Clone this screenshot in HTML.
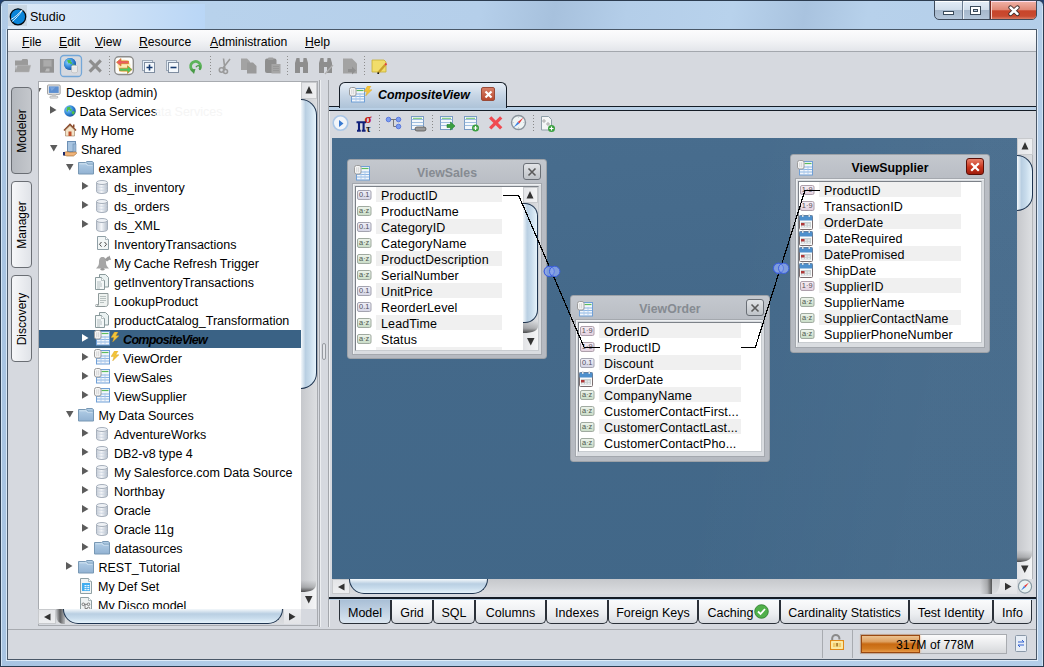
<!DOCTYPE html><html><head><meta charset="utf-8"><style>
*{margin:0;padding:0;box-sizing:border-box}
html,body{width:1044px;height:667px;overflow:hidden}
body{position:relative;background:#22406e;font-family:"Liberation Sans",sans-serif;font-size:12px;color:#000}
.a{position:absolute}
.t{position:absolute;white-space:nowrap;line-height:14px}
.row{position:absolute;height:19px;line-height:19px;white-space:nowrap;font-size:12.5px;word-spacing:-.3px}
.f{position:absolute;height:16px;line-height:16px;white-space:nowrap;font-size:12.5px;letter-spacing:.12px}
</style></head><body>
<svg width="0" height="0" style="position:absolute">
<defs>
<linearGradient id="gdb" x1="0" x2="1"><stop offset="0" stop-color="#c5ccd6"/><stop offset=".45" stop-color="#f4f6f9"/><stop offset="1" stop-color="#b3bcc8"/></linearGradient>
<linearGradient id="gfold" x1="0" y1="0" x2="0" y2="1"><stop offset="0" stop-color="#b4d0e8"/><stop offset="1" stop-color="#92b2d2"/></linearGradient>
<radialGradient id="gglobe" cx=".35" cy=".35" r=".7"><stop offset="0" stop-color="#8fd0ff"/><stop offset=".6" stop-color="#2f86d6"/><stop offset="1" stop-color="#1a4f9a"/></radialGradient>
<symbol id="i-monitor" viewBox="0 0 16 16"><rect x=".5" y=".5" width="13.5" height="10" rx="1" fill="#e8e8e8" stroke="#9a9a9a"/><rect x="2" y="2" width="10.5" height="7" fill="#5d8fd0"/><path d="M3 3l6 0-4 4z" fill="#8db4e6" opacity=".6"/><rect x="5" y="10.5" width="4.5" height="2" fill="#cfcfcf"/><rect x="3" y="12.5" width="8.5" height="2" rx=".8" fill="#eee" stroke="#999" stroke-width=".7"/></symbol>
<symbol id="i-globe" viewBox="0 0 12 12"><circle cx="6" cy="6" r="5.8" fill="url(#gglobe)"/><path d="M3 2.5c1-.8 2.5-1 3.5-.6l-.5 1.6 1.5.6.3 1.5-1.6.5-.8-1.2-1.4.2-.2 1.6-1.3-.6z M7.5 6.5l2.5-.5.8 1.8-1.5 2-1.3-1z" fill="#4cc04a"/></symbol>
<symbol id="i-house" viewBox="0 0 14 14"><path d="M1 7.5L7 1.5l6 6" fill="none" stroke="#8a4a2a" stroke-width="1.6"/><path d="M2.5 7v6h9V7L7 2.8z" fill="#f3e3c8" stroke="#9a7a5a" stroke-width=".6"/><rect x="5.5" y="8.5" width="3" height="4.5" fill="#c0502a"/><rect x="10" y="1.5" width="1.5" height="3" fill="#8a4a2a"/></symbol>
<symbol id="i-shared" viewBox="0 0 16 16"><rect x="4.5" y=".5" width="8" height="10" fill="#a8c4e0" stroke="#6c8fb4"/><rect x="10" y="3" width="3" height="8" fill="#9bb8d6" stroke="#6c8fb4" stroke-width=".6"/><path d="M1 11.5c2-1 4-1 6 0l5-.5c1 0 2 .5 1.5 1.5l-3 2.5H4L1 14z" fill="#f0b47a" stroke="#a0642a" stroke-width=".6"/><rect x="0" y="11" width="2" height="3.5" fill="#1c2a6a"/></symbol>
<symbol id="i-folder" viewBox="0 0 16 14"><path d="M.5 1.5h7l1.5-1h5l1.5 1v11.5H.5z" fill="url(#gfold)" stroke="#7898b4"/><path d="M1.5 2.8h6.5l1.3 1.4h5.2" fill="none" stroke="#d4e4f2" stroke-width=".9"/><path d="M8.8 1.5l1.2 1.6h5" fill="none" stroke="#7e9eba" stroke-width=".8"/></symbol>
<symbol id="i-db" viewBox="0 0 12 14"><path d="M.5 2.5v9c0 1.2 2.5 2 5.5 2s5.5-.8 5.5-2v-9" fill="url(#gdb)" stroke="#a7b0bc"/><ellipse cx="6" cy="2.5" rx="5.5" ry="2" fill="#eef1f5" stroke="#a7b0bc"/><path d="M.8 6.5c1 1 9.4 1 10.4 0M.8 9.5c1 1 9.4 1 10.4 0" fill="none" stroke="#c8d2e0" stroke-width=".8"/></symbol>
<symbol id="i-dbp" viewBox="0 0 12 14"><path d="M.5 2.5v9c0 1.2 2.5 2 5.5 2s5.5-.8 5.5-2v-9" fill="url(#gdb)" stroke="#a7b0bc"/><ellipse cx="6" cy="2.5" rx="5.5" ry="2" fill="#eef1f5" stroke="#a7b0bc"/></symbol>
<symbol id="i-xml" viewBox="0 0 12 14"><path d="M.5.5h8l3 3v10H.5z" fill="#f2f6f6" stroke="#8f9fa6"/><path d="M8.5.5v3h3" fill="#fff" stroke="#8f9fa6" stroke-width=".7"/><path d="M4.5 6L2.5 8.3l2 2.3M7.5 6l2 2.3-2 2.3" fill="none" stroke="#4a4a4a" stroke-width="1"/></symbol>
<symbol id="i-bell" viewBox="0 0 16 16"><path d="M7.5 2C4.5 2 4 4.5 4 7.5 4 10 3 11.5 1 13.5h13c-2-2-3-3.5-3-6C11 4.5 10.5 2 7.5 2z" fill="#a6a6a6"/><ellipse cx="7.5" cy="14.3" rx="2" ry="1.2" fill="#9a9a9a"/><path d="M9.5 4.5L13 1.5l2.5 2.5-3.5 2.5z" fill="#9c9c9c"/><path d="M14.5 .5l1.5 4.5-4.5-1z" fill="#9c9c9c"/></symbol>
<symbol id="i-doc" viewBox="0 0 14 16"><path d="M4.5 .5h6l3 3v9.5h-9z" fill="#eaf2f2" stroke="#8a9a9c"/><path d="M.5 3.5h6l3 3v9h-9z" fill="#f4f8f8" stroke="#8a9a9c"/><path d="M6.5 3.5v3h3" fill="#fff" stroke="#8a9a9c" stroke-width=".6"/><path d="M2 8h4M2 10h5M2 12h5M2 14h3" stroke="#a4b0b2" stroke-width=".8"/></symbol>
<symbol id="i-scroll" viewBox="0 0 14 14"><path d="M3.5 .5h9.5v10.5c0 1.5-1 2.5-2.5 2.5H1c1.5 0 2.5-1 2.5-2.5z" fill="#eef2f0" stroke="#8f9a9a"/><path d="M1 13.5c-1 0-1-2 .5-2h2" fill="none" stroke="#8f9a9a" stroke-width=".8"/><path d="M5 3.5h6M5 5.5h6M5 7.5h6M5 9.5h4" stroke="#a8b2b2" stroke-width=".8"/></symbol>
<symbol id="i-view" viewBox="0 0 16 16"><rect x="2.5" y="1.5" width="13" height="13.5" fill="#f2f6fb" stroke="#6f9fd6"/><path d="M3 7h12M3 9.5h12M3 12h12" stroke="#8db6e4" stroke-width="1"/><path d="M7 6v9M11 6v9" stroke="#a9c8ea" stroke-width=".8"/><path d="M7.5 3.5h7" stroke="#5cbc5c" stroke-width="1.2"/><rect x=".5" y=".5" width="6.5" height="8.5" rx="2" fill="#f6f6f6" stroke="#9c9c9c"/><path d="M2.8 2.3v5M4.7 2.3v5" stroke="#c4c4c4" stroke-width=".7"/></symbol>
<symbol id="i-bolt" viewBox="0 0 8 10"><path d="M3.5 0L0 5.6h3L1.6 10 8 3.8H4.8L7 0z" fill="#f2c43a" stroke="#d8a020" stroke-width=".4"/></symbol>
<symbol id="i-defset" viewBox="0 0 12 16"><path d="M.5.5h8l3 3v12H.5z" fill="#f0f4f4" stroke="#8fa0a4"/><path d="M8.5.5v3h3" fill="#fff" stroke="#8fa0a4" stroke-width=".7"/><rect x="2" y="5" width="8" height="8" fill="#42aef0"/><g fill="#eaf6fe"><rect x="4.5" y="7" width="2" height="1.2"/><rect x="7.3" y="7" width="2" height="1.2"/><rect x="4.5" y="9" width="2" height="1.2"/><rect x="7.3" y="9" width="2" height="1.2"/><rect x="4.5" y="11" width="2" height="1.2"/><rect x="7.3" y="11" width="2" height="1.2"/></g></symbol>
<symbol id="i-disco" viewBox="0 0 12 16"><path d="M.5.5h8l3 3v12H.5z" fill="#eef2f2" stroke="#8fa0a4"/><path d="M8.5.5v3h3" fill="#fff" stroke="#8fa0a4" stroke-width=".7"/><g fill="none" stroke="#6a6a6a" stroke-width=".8"><circle cx="3.3" cy="7.3" r="1.3"/><circle cx="8.5" cy="7.3" r="1.3"/><circle cx="8.5" cy="11.5" r="1.3"/><path d="M4.6 7.3h2.6M5 7.5v4h2.2"/></g></symbol>



<linearGradient id="g01" x1="0" y1="0" x2="0" y2="1"><stop offset="0" stop-color="#f0f0f8"/><stop offset="1" stop-color="#d4d4e4"/></linearGradient>
<linearGradient id="gaz" x1="0" y1="0" x2="0" y2="1"><stop offset="0" stop-color="#eef4ec"/><stop offset="1" stop-color="#c8dcc6"/></linearGradient>
<linearGradient id="g19" x1="0" y1="0" x2="0" y2="1"><stop offset="0" stop-color="#f6eef4"/><stop offset="1" stop-color="#e2d0de"/></linearGradient>
<symbol id="t-01" viewBox="0 0 15 10"><rect x=".5" y=".5" width="13.5" height="9" rx="1.5" fill="url(#g01)" stroke="#a4a4b0"/><text x="7.2" y="7.4" font-size="7.4" text-anchor="middle" font-family="Liberation Sans" fill="#505060">0.1</text></symbol>
<symbol id="t-az" viewBox="0 0 15 10"><rect x=".5" y=".5" width="13.5" height="9" rx="1.5" fill="url(#gaz)" stroke="#a0aaa0"/><text x="7.2" y="7.4" font-size="7.4" text-anchor="middle" font-family="Liberation Sans" fill="#505850">a&#183;z</text></symbol>
<symbol id="t-19" viewBox="0 0 15 10"><rect x=".5" y=".5" width="13.5" height="9" rx="1.5" fill="url(#g19)" stroke="#aea0ac"/><text x="7.2" y="7.4" font-size="7.4" text-anchor="middle" font-family="Liberation Sans" fill="#585058">1&#183;9</text></symbol>
<symbol id="t-cal" viewBox="0 0 14 16"><rect x=".5" y="1.5" width="13" height="14" rx="1" fill="#fafafa" stroke="#7a6e70"/><rect x=".5" y="1.5" width="13" height="5" fill="#4d8fcc"/><rect x="3" y="0" width="1.5" height="3" fill="#d8dde2"/><rect x="9.5" y="0" width="1.5" height="3" fill="#d8dde2"/><rect x="2" y="8" width="10" height="5.5" fill="#c8d0d2"/><rect x="2" y="9" width="3.5" height="2.5" fill="#b03838"/><path d="M6 10.2h1.6M8.8 10.2h2M6 12.3h1.6M8.8 12.3h2M3 12.3h2" stroke="#fff" stroke-width=".8"/></symbol>
</defs></svg>
<div class="a" style="left:0;top:0;width:1044px;height:667px;background:linear-gradient(90deg,#a8c4e2 0,#b6d0ea 30%,#b6d0ea 70%,#b3cde8 100%);border:1px solid #2c3c50;border-radius:6px 6px 0 0"></div>
<div class="a" style="left:1px;top:1px;width:1042px;height:28px;border-radius:5px 5px 0 0;background:linear-gradient(100deg,#b0cae6 0%,#b8d2ec 20%,#b5cfea 46%,#a7c1dd 53%,#b4cee9 60%,#b8d2ec 70%,#a9c3df 77%,#b7d1eb 83%,#b4cee9 100%)"></div>
<div class="a" style="left:8px;top:4px;width:197px;height:25px;background:linear-gradient(90deg,#dce9f7 0,#cfe2f6 50%,#b9d6f6 100%)"></div>
<div class="a" style="left:8px;top:5px;width:19px;height:21px;background:rgba(190,200,212,.55)"></div>
<svg class="a" style="left:9px;top:8px" width="18" height="18" viewBox="0 0 18 18"><ellipse cx="9" cy="8.8" rx="7.7" ry="8" fill="#0a84d8" stroke="#050a10" stroke-width="1.3"/><path d="M1.8 11.5C6 9.5 10 5.5 12.8 2.2M3.2 13.5C6.5 11 10.5 6.5 13.2 2.4" stroke="#f4faff" stroke-width=".9" fill="none"/></svg>
<div class="t" style="left:30px;top:10px;font-size:12.5px;color:#000">Studio</div>
<div class="a" style="left:934px;top:0;width:103px;height:20px;border:1px solid #3e4a5a;border-radius:0 0 5px 5px;overflow:hidden;background:linear-gradient(180deg,#e4edf7 0,#d2deeb 48%,#a6b8cc 52%,#b4c6da 100%);box-shadow:inset 0 1px 0 #fff">
 <div class="a" style="left:27px;top:0;width:1px;height:20px;background:#6c7c90"></div>
 <div class="a" style="left:28px;top:0;width:1px;height:20px;background:#eef4fa"></div>
 <div class="a" style="left:54px;top:0;width:1px;height:20px;background:#6c7c90"></div>
 <div class="a" style="left:55px;top:0;width:48px;height:19px;background:linear-gradient(180deg,#f0b4a8 0,#e08a78 45%,#c8452a 52%,#c84a30 80%,#e0907a 100%);border-left:1px solid #7a2a20;box-shadow:inset 0 1px 0 #fde,inset 1px 0 0 #f8d0c8"></div>
 <div class="a" style="left:8px;top:10px;width:11px;height:4px;background:#fff;border:1px solid #3a4a5a"></div>
 <div class="a" style="left:35px;top:5px;width:11px;height:9px;background:#fff;border:1px solid #3a4a5a"></div>
 <div class="a" style="left:38px;top:8px;width:5px;height:3px;background:#b9c9dc;border:1px solid #3a4a5a"></div>
</div>
<svg class="a" style="left:1006.5px;top:5px" width="14" height="12" viewBox="0 0 14 12"><path d="M3.5 2.5l7 6.5M10.5 2.5l-7 6.5" stroke="#3a2a2a" stroke-width="4.2" stroke-linecap="round"/><path d="M3.5 2.5l7 6.5M10.5 2.5l-7 6.5" stroke="#fff" stroke-width="2.4" stroke-linecap="round"/></svg>
<div class="a" style="left:1px;top:6px;width:1px;height:660px;background:#dcecfa;opacity:.8"></div>
<div class="a" style="left:6px;top:29px;width:1px;height:632px;background:#e4f0fb;opacity:.8"></div>
<div class="a" style="left:1037px;top:29px;width:1px;height:632px;background:#e4f0fb;opacity:.9"></div>
<div class="a" style="left:1042px;top:6px;width:1px;height:660px;background:#dcecfa;opacity:.7"></div>
<div class="a" style="left:6px;top:660px;width:1032px;height:1px;background:#e4f0fb;opacity:.9"></div>
<div class="a" style="left:7px;top:29px;width:1030px;height:631px;background:#d6d9df;border:1px solid #4a5868"></div>
<div class="a" style="left:8px;top:30px;width:1028px;height:22px;background:linear-gradient(180deg,#fcfcfd 0,#f4f5f7 45%,#e3e5ea 100%);border-bottom:1px solid #a3a7ad"></div>
<div class="t" style="left:22px;top:35px;font-size:12.2px"><u>F</u>ile</div>
<div class="t" style="left:59px;top:35px;font-size:12.2px"><u>E</u>dit</div>
<div class="t" style="left:95px;top:35px;font-size:12.2px"><u>V</u>iew</div>
<div class="t" style="left:139px;top:35px;font-size:12.2px"><u>R</u>esource</div>
<div class="t" style="left:210px;top:35px;font-size:12.2px"><u>A</u>dministration</div>
<div class="t" style="left:305px;top:35px;font-size:12.2px"><u>H</u>elp</div>
<!-- toolbar -->
<svg class="a" style="left:0;top:52px" width="400" height="30" viewBox="0 52 400 30">
 <path d="M15 60.5h6.5l1-1.5h4.8l.7 1.5v5H15z" fill="#9a9a9a"/>
 <path d="M17.5 65.3h13.2L29 72H15z" fill="#a3a3a3" stroke="#b4b4b4" stroke-width=".5"/>
 <path d="M15 64v8h1" fill="#9a9a9a"/>
 <rect x="40" y="59" width="14" height="13.7" fill="#939393"/>
 <rect x="43.2" y="60" width="8.5" height="6.7" fill="#ababab" stroke="#9e9e9e" stroke-width=".6"/>
 <path d="M45 71.5l1.5-3h3v3z" fill="#b9b9b9"/>
 <rect x="60.5" y="55.5" width="21" height="21" rx="3.5" fill="none" stroke="#74a7d8" stroke-width="1.3"/>
 <circle cx="70" cy="64" r="6" fill="#2e7fd0"/>
 <circle cx="70" cy="64" r="6" fill="url(#gglobe)"/><path d="M67 60.5c1.5-1 3-1 4-.6l-.6 1.6 1.4.8.2 1.4-1.4.4-.8-1-1.2.3z M72 64.5l2-.3.6 1.4-1.2 1.4z" fill="#4cc04a"/>
 <ellipse cx="74.5" cy="66.5" rx="3" ry="1.3" fill="#f4f4f4" stroke="#aaa" stroke-width=".5"/>
 <path d="M71.5 66.5v5c0 .8 1.3 1.3 3 1.3s3-.5 3-1.3v-5" fill="#e8e8e8" stroke="#aaa" stroke-width=".5"/>
 <path d="M90.8 61.6l8.8 8.8M99.6 61.6l-8.8 8.8" stroke="#8e8e8e" stroke-width="3.2" stroke-linecap="square"/>
 <g fill="#8e8e8e">
  <rect x="109" y="56" width="1" height="1"/><rect x="109" y="59" width="1" height="1"/><rect x="109" y="62" width="1" height="1"/><rect x="109" y="65" width="1" height="1"/><rect x="109" y="68" width="1" height="1"/><rect x="109" y="71" width="1" height="1"/><rect x="109" y="74" width="1" height="1"/>
  <rect x="210" y="56" width="1" height="1"/><rect x="210" y="59" width="1" height="1"/><rect x="210" y="62" width="1" height="1"/><rect x="210" y="65" width="1" height="1"/><rect x="210" y="68" width="1" height="1"/><rect x="210" y="71" width="1" height="1"/><rect x="210" y="74" width="1" height="1"/>
  <rect x="287" y="56" width="1" height="1"/><rect x="287" y="59" width="1" height="1"/><rect x="287" y="62" width="1" height="1"/><rect x="287" y="65" width="1" height="1"/><rect x="287" y="68" width="1" height="1"/><rect x="287" y="71" width="1" height="1"/><rect x="287" y="74" width="1" height="1"/>
  <rect x="364" y="56" width="1" height="1"/><rect x="364" y="59" width="1" height="1"/><rect x="364" y="62" width="1" height="1"/><rect x="364" y="65" width="1" height="1"/><rect x="364" y="68" width="1" height="1"/><rect x="364" y="71" width="1" height="1"/><rect x="364" y="74" width="1" height="1"/>
 </g>
 <rect x="114.7" y="56.7" width="18.6" height="17.8" rx="4" fill="#fdfdfb" stroke="#8c8c8c" stroke-width="1.4"/>
 <circle cx="124" cy="66" r="6.5" fill="#fbe6a0" opacity=".75"/>
 <path d="M116.5 62.3L121 58.6V61h7.5v2.7H121v2.4z" fill="#ec5a62" stroke="#d08020" stroke-width=".7"/>
 <path d="M132 69.6L127.5 65.8v2.4H119.5v2.8h8v2.4z" fill="#4cc860" stroke="#d08020" stroke-width=".7"/>
 <rect x="142.5" y="60.5" width="10" height="10" fill="#e4eef8" stroke="#9aa6b5"/>
 <rect x="144.5" y="62.5" width="10" height="10" fill="#f4f8fc" stroke="#7f8da0"/>
 <path d="M146.5 67.5h6M149.5 64.5v6" stroke="#173a70" stroke-width="1.6"/>
 <rect x="166.5" y="60.5" width="10" height="10" fill="#e4eef8" stroke="#9aa6b5"/>
 <rect x="168.5" y="62.5" width="10" height="10" fill="#f4f8fc" stroke="#7f8da0"/>
 <path d="M170.5 67.5h6" stroke="#173a70" stroke-width="1.6"/>
 <path d="M193.2 70.8A5 5 0 1 1 199.5 69.5" fill="none" stroke="#5cb35a" stroke-width="2.8"/>
 <path d="M199.2 69.8a2.2 2.2 0 1 0-3.2-2.6" fill="none" stroke="#4a9a48" stroke-width="1.3"/>
 <path d="M190 69.5l5.5-.5-1.5 5z" fill="#4a9a48"/>
 <g fill="none" stroke="#9a9a9a" stroke-width="1.6">
  <circle cx="221.5" cy="70" r="2.2"/><circle cx="225.5" cy="71.5" r="2"/>
  <path d="M223 68l7-9M225 69.5l-1.5-11"/>
 </g>
 <path d="M241 58.5h6l3 3v8.5h-9z" fill="#a3a3a3"/>
 <path d="M247 62.5h6l3.5 3.5v7.5H247z" fill="#9a9a9a"/>
 <rect x="265" y="58.5" width="11.5" height="14.5" rx="2" fill="#8e8e8e"/>
 <rect x="268" y="57.5" width="5.5" height="2.5" rx="1" fill="#a0a0a0"/>
 <rect x="271.5" y="64" width="9" height="9.5" fill="#a5a5a5"/>
 <path d="M273 66.5h6M273 68.5h6M273 70.5h6" stroke="#929292" stroke-width=".7"/>
 <g fill="#8e8e8e">
  <path d="M295 63l1.5-5h3l.5 5v10h-5z"/><path d="M303 63l.5-5h3l1.5 5v10h-5z"/><rect x="299" y="62" width="5" height="5"/>
  <path d="M319 63l1.5-5h3l.5 5v10h-5z"/><path d="M327 63l.5-5h3l1.5 5v10h-5z"/><rect x="323" y="62" width="5" height="5"/>
 </g>
 <path d="M325 74l8-9" stroke="#b0b0b0" stroke-width="1.2"/>
 <path d="M343 58.5h9l5 5v10h-14z" fill="#a3a3a3"/>
 <path d="M348 69h4v-2.5l4 4-4 4V72h-4z" fill="#8f8f8f"/>
 <path d="M372 60h12l2 2v10h-14z" fill="#f1dd6a" stroke="#c5ad32" stroke-width=".8"/>
 <path d="M378 73l7-8" stroke="#c9a02c" stroke-width="2.2"/>
 <path d="M385 65l1.5-1.5" stroke="#e04040" stroke-width="2"/>
 <circle cx="378.2" cy="73.2" r=".9" fill="#111"/>
</svg>
<div class="a" style="left:11px;top:87px;width:21px;height:87px;border:1px solid #6a6e74;border-radius:4px;background:linear-gradient(90deg,#b4b8be,#c4c7cc)"></div>
<div class="t" style="left:-28.5px;top:123.5px;width:100px;text-align:center;transform:rotate(-90deg);font-size:12px">Modeler</div>
<div class="a" style="left:11px;top:181px;width:21px;height:87px;border:1px solid #6a6e74;border-radius:4px;background:linear-gradient(90deg,#f6f7f9,#e0e3e8)"></div>
<div class="t" style="left:-28.5px;top:217.5px;width:100px;text-align:center;transform:rotate(-90deg);font-size:12px">Manager</div>
<div class="a" style="left:11px;top:275px;width:21px;height:87px;border:1px solid #6a6e74;border-radius:4px;background:linear-gradient(90deg,#f6f7f9,#e0e3e8)"></div>
<div class="t" style="left:-28.5px;top:311.5px;width:100px;text-align:center;transform:rotate(-90deg);font-size:12px">Discovery</div>
<div class="a" style="left:38px;top:81px;width:280px;height:545px;border:1px solid #a8abb0;background:#d6d9df"></div>
<div class="a" style="left:38px;top:82px;width:263px;height:527px;background:#fff;overflow:hidden" id="tree">
<svg class="a" style="left:-4px;top:6px" width="8" height="7"><path d="M0 0h7.5L3.75 6.5z" fill="#5c5c5c"/></svg>
<svg class="a" style="left:9px;top:2px" width="15" height="16"><use href="#i-monitor"/></svg>
<div class="row" style="left:28px;top:1.5px;">Desktop (admin)</div>
<svg class="a" style="left:12px;top:24px" width="7" height="8"><path d="M0 0L6.5 3.9 0 7.8z" fill="#5c5c5c"/></svg>
<svg class="a" style="left:26px;top:23px" width="12" height="12"><use href="#i-globe"/></svg>
<div class="row" style="left:41.5px;top:20.5px;">Data Services</div>
<svg class="a" style="left:25px;top:41px" width="14" height="14"><use href="#i-house"/></svg>
<div class="row" style="left:43px;top:39.5px;">My Home</div>
<svg class="a" style="left:12px;top:63px" width="8" height="7"><path d="M0 0h7.5L3.75 6.5z" fill="#5c5c5c"/></svg>
<svg class="a" style="left:25px;top:59px" width="16" height="16"><use href="#i-shared"/></svg>
<div class="row" style="left:43px;top:58.5px;">Shared</div>
<svg class="a" style="left:28px;top:82px" width="8" height="7"><path d="M0 0h7.5L3.75 6.5z" fill="#5c5c5c"/></svg>
<svg class="a" style="left:40px;top:78.6px" width="16" height="14"><use href="#i-folder"/></svg>
<div class="row" style="left:60.5px;top:77.5px;">examples</div>
<svg class="a" style="left:44px;top:100px" width="7" height="8"><path d="M0 0L6.5 3.9 0 7.8z" fill="#5c5c5c"/></svg>
<svg class="a" style="left:58px;top:98px" width="12" height="14"><use href="#i-db"/></svg>
<div class="row" style="left:76px;top:96.5px;">ds_inventory</div>
<svg class="a" style="left:44px;top:119px" width="7" height="8"><path d="M0 0L6.5 3.9 0 7.8z" fill="#5c5c5c"/></svg>
<svg class="a" style="left:58px;top:117px" width="12" height="14"><use href="#i-db"/></svg>
<div class="row" style="left:76px;top:115.5px;">ds_orders</div>
<svg class="a" style="left:44px;top:138px" width="7" height="8"><path d="M0 0L6.5 3.9 0 7.8z" fill="#5c5c5c"/></svg>
<svg class="a" style="left:58px;top:136px" width="12" height="14"><use href="#i-dbp"/></svg>
<div class="row" style="left:76px;top:134.5px;">ds_XML</div>
<svg class="a" style="left:59px;top:154px" width="12" height="14"><use href="#i-xml"/></svg>
<div class="row" style="left:76px;top:153.5px;">InventoryTransactions</div>
<svg class="a" style="left:57px;top:173px" width="16" height="16"><use href="#i-bell"/></svg>
<div class="row" style="left:76px;top:172.5px;">My Cache Refresh Trigger</div>
<svg class="a" style="left:57px;top:192px" width="14" height="16"><use href="#i-doc"/></svg>
<div class="row" style="left:76px;top:191.5px;">getInventoryTransactions</div>
<svg class="a" style="left:57px;top:211px" width="14" height="14"><use href="#i-scroll"/></svg>
<div class="row" style="left:76px;top:210.5px;">LookupProduct</div>
<svg class="a" style="left:57px;top:230px" width="14" height="16"><use href="#i-doc"/></svg>
<div class="row" style="left:76px;top:229.5px;">productCatalog_Transformation</div>
<div class="a" style="left:1px;top:248px;width:263px;height:18px;background:#3a6285"></div>
<svg class="a" style="left:44px;top:252px" width="7" height="8"><path d="M0 0L6.5 3.9 0 7.8z" fill="#fff"/></svg>
<svg class="a" style="left:56px;top:248px" width="16" height="16"><use href="#i-view"/></svg>
<svg class="a" style="left:73px;top:250px" width="8" height="10"><use href="#i-bolt"/></svg>
<div class="row" style="left:85px;top:248.5px;font-weight:bold;font-style:italic;letter-spacing:-.65px;">CompositeView</div>
<svg class="a" style="left:44px;top:271px" width="7" height="8"><path d="M0 0L6.5 3.9 0 7.8z" fill="#5c5c5c"/></svg>
<svg class="a" style="left:56px;top:267px" width="16" height="16"><use href="#i-view"/></svg>
<svg class="a" style="left:73px;top:269px" width="8" height="10"><use href="#i-bolt"/></svg>
<div class="row" style="left:85px;top:267.5px;">ViewOrder</div>
<svg class="a" style="left:44px;top:290px" width="7" height="8"><path d="M0 0L6.5 3.9 0 7.8z" fill="#5c5c5c"/></svg>
<svg class="a" style="left:56px;top:286px" width="16" height="16"><use href="#i-view"/></svg>
<div class="row" style="left:76px;top:286.5px;">ViewSales</div>
<svg class="a" style="left:44px;top:309px" width="7" height="8"><path d="M0 0L6.5 3.9 0 7.8z" fill="#5c5c5c"/></svg>
<svg class="a" style="left:56px;top:305px" width="16" height="16"><use href="#i-view"/></svg>
<div class="row" style="left:76px;top:305.5px;">ViewSupplier</div>
<svg class="a" style="left:28px;top:329px" width="8" height="7"><path d="M0 0h7.5L3.75 6.5z" fill="#5c5c5c"/></svg>
<svg class="a" style="left:40px;top:325.6px" width="16" height="14"><use href="#i-folder"/></svg>
<div class="row" style="left:60.5px;top:324.5px;">My Data Sources</div>
<svg class="a" style="left:44px;top:347px" width="7" height="8"><path d="M0 0L6.5 3.9 0 7.8z" fill="#5c5c5c"/></svg>
<svg class="a" style="left:58px;top:345px" width="12" height="14"><use href="#i-db"/></svg>
<div class="row" style="left:76px;top:343.5px;">AdventureWorks</div>
<svg class="a" style="left:44px;top:366px" width="7" height="8"><path d="M0 0L6.5 3.9 0 7.8z" fill="#5c5c5c"/></svg>
<svg class="a" style="left:58px;top:364px" width="12" height="14"><use href="#i-db"/></svg>
<div class="row" style="left:76px;top:362.5px;">DB2-v8 type 4</div>
<svg class="a" style="left:44px;top:385px" width="7" height="8"><path d="M0 0L6.5 3.9 0 7.8z" fill="#5c5c5c"/></svg>
<svg class="a" style="left:58px;top:383px" width="12" height="14"><use href="#i-db"/></svg>
<div class="row" style="left:76px;top:381.5px;">My Salesforce.com Data Source</div>
<svg class="a" style="left:44px;top:404px" width="7" height="8"><path d="M0 0L6.5 3.9 0 7.8z" fill="#5c5c5c"/></svg>
<svg class="a" style="left:58px;top:402px" width="12" height="14"><use href="#i-db"/></svg>
<div class="row" style="left:76px;top:400.5px;">Northbay</div>
<svg class="a" style="left:44px;top:423px" width="7" height="8"><path d="M0 0L6.5 3.9 0 7.8z" fill="#5c5c5c"/></svg>
<svg class="a" style="left:58px;top:421px" width="12" height="14"><use href="#i-db"/></svg>
<div class="row" style="left:76px;top:419.5px;">Oracle</div>
<svg class="a" style="left:44px;top:442px" width="7" height="8"><path d="M0 0L6.5 3.9 0 7.8z" fill="#5c5c5c"/></svg>
<svg class="a" style="left:58px;top:440px" width="12" height="14"><use href="#i-db"/></svg>
<div class="row" style="left:76px;top:438.5px;">Oracle 11g</div>
<svg class="a" style="left:44px;top:461px" width="7" height="8"><path d="M0 0L6.5 3.9 0 7.8z" fill="#5c5c5c"/></svg>
<svg class="a" style="left:56px;top:458.6px" width="16" height="14"><use href="#i-folder"/></svg>
<div class="row" style="left:76.5px;top:457.5px;">datasources</div>
<svg class="a" style="left:28px;top:480px" width="7" height="8"><path d="M0 0L6.5 3.9 0 7.8z" fill="#5c5c5c"/></svg>
<svg class="a" style="left:40px;top:477.6px" width="16" height="14"><use href="#i-folder"/></svg>
<div class="row" style="left:60.5px;top:476.5px;">REST_Tutorial</div>
<svg class="a" style="left:42px;top:496px" width="12" height="16"><use href="#i-defset"/></svg>
<div class="row" style="left:60px;top:495.5px;">My Def Set</div>
<svg class="a" style="left:42px;top:515px" width="12" height="16"><use href="#i-disco"/></svg>
<div class="row" style="left:60px;top:514.5px;">My Disco model</div>
<div class="row" style="left:116px;top:20.5px;color:#f5f5f5">ata Services</div>
</div>
<div class="a" style="left:38px;top:81px;width:1px;height:544px;background:#a8abb0"></div>
<div class="a" style="left:301px;top:82px;width:16px;height:527px;background:linear-gradient(90deg,#c6c8cc,#dcdee1);"></div>
<div class="a" style="left:301px;top:82px;width:16px;height:17px;background:linear-gradient(90deg,#e4e5e8,#eeeff1);border:1px solid #c8cacd"></div>
<svg class="a" style="left:305px;top:86px" width="8" height="8"><path d="M4 0L7.5 7.5H.5z" fill="#333"/></svg>
<div class="a" style="left:301px;top:99px;width:16px;height:290px;border:1.5px solid #1f3550;border-left:none;border-radius:0 16px 16px 0;background:linear-gradient(90deg,#f4f8fb 0,#b9cfe2 30%,#c8dcec 60%,#e6f3fb 100%)"></div>
<svg class="a" style="left:301px;top:579.5px" width="15" height="29.5"><defs><linearGradient id="vs1" x1="0" y1="0" x2="0" y2="1"><stop offset="0" stop-color="#000" stop-opacity="0"/><stop offset=".6" stop-color="#000" stop-opacity=".18"/><stop offset="1" stop-color="#000" stop-opacity=".62"/></linearGradient><linearGradient id="vb1" x1="0" x2="1"><stop offset="0" stop-color="#e2e3e6"/><stop offset="1" stop-color="#f4f5f6"/></linearGradient></defs>
<rect x="0" y="0" width="15" height="12" fill="url(#vs1)"/>
<path d="M0 12 Q15 12 15 4.5 V29.5 H0z" fill="url(#vb1)"/>
<path d="M4 16.0h7.5l-3.75 7.5z" fill="#333"/></svg>
<div class="a" style="left:38px;top:609px;width:263px;height:15px;background:linear-gradient(180deg,#c6c8cc,#dcdee1)"></div>
<div class="a" style="left:38px;top:609px;width:18px;height:15px;background:linear-gradient(180deg,#e4e5e8,#eeeff1);border:1px solid #c8cacd"></div>
<svg class="a" style="left:44px;top:613px" width="7" height="8"><path d="M0 4L6.5 .5v7z" fill="#333"/></svg>
<div class="a" style="left:56px;top:609px;width:9px;height:15px;background:linear-gradient(90deg,rgba(0,0,0,.05),rgba(0,0,0,.55) 45%,rgba(0,0,0,.15) 100%);border-radius:0 0 0 8px"></div>
<div class="a" style="left:63px;top:609px;width:220px;height:15px;border:1.5px solid #1f3550;border-top:none;border-radius:0 0 16px 16px;background:linear-gradient(180deg,#f4f8fb 0,#b9cfe2 35%,#c8dcec 65%,#e6f3fb 100%)"></div>
<div class="a" style="left:284px;top:609px;width:17px;height:15px;background:linear-gradient(180deg,#eeeff1,#e2e3e6)"></div>
<svg class="a" style="left:289px;top:612.8px" width="7" height="8"><path d="M0 0l6.5 3.75L0 7.5z" fill="#333"/></svg>
<div class="a" style="left:319px;top:80px;width:1px;height:547px;background:#a4a7ac"></div>
<div class="a" style="left:328px;top:80px;width:1px;height:547px;background:#a4a7ac"></div>
<div class="a" style="left:320px;top:80px;width:1px;height:547px;background:#eceef1"></div>
<div class="a" style="left:329px;top:110px;width:1px;height:517px;background:#eceef1"></div>
<div class="a" style="left:322px;top:343px;width:4px;height:17px;border:1px solid #979ba1;border-radius:2px;background:#e2e4e8"></div>
<div class="a" style="left:329px;top:106px;width:707px;height:5px;background:#b9d0e6;border-top:1.5px solid #141c26;border-bottom:1.5px solid #141c26"></div>
<div class="a" style="left:339px;top:82px;width:168px;height:26px;border:1.5px solid #141c26;border-bottom:none;border-radius:6px 6px 0 0;background:linear-gradient(180deg,#e7eef6 0,#c6d5e5 50%,#aec3d8 100%)"></div>
<svg class="a" style="left:349px;top:87px" width="16" height="16"><use href="#i-view"/></svg>
<svg class="a" style="left:364px;top:86px" width="8" height="10"><use href="#i-bolt"/></svg>
<div class="t" style="left:378px;top:88px;font-size:12.4px;font-weight:bold;font-style:italic">CompositeView</div>
<div class="a" style="left:481px;top:87px;width:14px;height:14px;border-radius:2px;background:linear-gradient(180deg,#d88068,#b8482e);border:1px solid #9a4a38"></div>
<svg class="a" style="left:483.5px;top:89.5px" width="9" height="9"><path d="M1.5 1.5l6 6M7.5 1.5l-6 6" stroke="#fff" stroke-width="2.2"/></svg>
<svg class="a" style="left:329px;top:111px" width="240" height="26" viewBox="329 111 240 26">
 <circle cx="340.5" cy="123" r="7.3" fill="#f2f5f9" stroke="#a9c6e6" stroke-width="1.6"/>
 <path d="M339 120v7l4.5-3.5z" fill="#3a7ad0"/>
 <path d="M356.5 122.3h9.5M359 122v8.6M363.6 122v8.6M357 130.8h3.8M361.8 130.8h3.8" stroke="#10207a" stroke-width="2.1" fill="none"/>
 <text x="364.5" y="122.5" font-family="Liberation Serif" font-weight="bold" font-size="13" fill="#c01818">&#963;</text>
 <text x="366" y="131.5" font-family="Liberation Serif" font-weight="bold" font-size="10" fill="#111">&#964;</text>
 <g fill="#888"><rect x="379" y="115" width="1" height="1"/><rect x="379" y="118" width="1" height="1"/><rect x="379" y="121" width="1" height="1"/><rect x="379" y="124" width="1" height="1"/><rect x="379" y="127" width="1" height="1"/><rect x="379" y="130" width="1" height="1"/>
 <rect x="432" y="115" width="1" height="1"/><rect x="432" y="118" width="1" height="1"/><rect x="432" y="121" width="1" height="1"/><rect x="432" y="124" width="1" height="1"/><rect x="432" y="127" width="1" height="1"/><rect x="432" y="130" width="1" height="1"/>
 <rect x="533" y="115" width="1" height="1"/><rect x="533" y="118" width="1" height="1"/><rect x="533" y="121" width="1" height="1"/><rect x="533" y="124" width="1" height="1"/><rect x="533" y="127" width="1" height="1"/><rect x="533" y="130" width="1" height="1"/></g>
 <path d="M390 119.5h6M393.5 119.5v7h3" fill="none" stroke="#777" stroke-width="1"/>
 <circle cx="388.5" cy="119.5" r="2.3" fill="#7a9cf0" stroke="#4a6ad8" stroke-width=".8"/><circle cx="398.5" cy="119.5" r="2.3" fill="#7a9cf0" stroke="#4a6ad8" stroke-width=".8"/><circle cx="398.5" cy="126.5" r="2.3" fill="#7a9cf0" stroke="#4a6ad8" stroke-width=".8"/>
 <g><rect x="411.5" y="116.5" width="12" height="13" fill="#f4f8fc" stroke="#7a9cc4"/><path d="M411.5 119.5h12M411.5 122.5h12M411.5 125.5h12" stroke="#8ab0d8" stroke-width=".8"/><path d="M413 118.3h9" stroke="#5cbc5c" stroke-width=".9"/><rect x="415" y="127" width="11" height="4" rx="2" fill="#999" stroke="#555" stroke-width=".8"/></g>
 <g><rect x="440.5" y="116.5" width="12" height="13" fill="#f4f8fc" stroke="#7a9cc4"/><path d="M440.5 119.5h12M440.5 122.5h12M440.5 125.5h12" stroke="#8ab0d8" stroke-width=".8"/><path d="M442 118.3h9" stroke="#5cbc5c" stroke-width=".9"/><path d="M447 124.5h3.5v-2.5l4.5 4-4.5 4v-2.5H447z" fill="#3aa040" stroke="#1f7a2a" stroke-width=".6"/></g>
 <g><rect x="464.5" y="116.5" width="12" height="13" fill="#f4f8fc" stroke="#7a9cc4"/><path d="M464.5 119.5h12M464.5 122.5h12M464.5 125.5h12" stroke="#8ab0d8" stroke-width=".8"/><path d="M466 118.3h9" stroke="#5cbc5c" stroke-width=".9"/><circle cx="475.5" cy="128" r="3.5" fill="#3aa040"/><path d="M473.5 128h4M475.5 126v4" stroke="#fff" stroke-width="1.2"/></g>
 <path d="M490.2 117.3l11 11M501.2 117.3l-11 11" stroke="#f04a50" stroke-width="3.3"/>
 <circle cx="518.5" cy="122.5" r="7" fill="#eef4f4" stroke="#8a949c" stroke-width="1.4"/>
 <g stroke="#aab" stroke-width=".6"><path d="M518.5 116.5v1.3M518.5 127.2v1.3M512.5 122.5h1.3M523.2 122.5h1.3"/></g>
 <path d="M523.5 117.5l-5.8 4.4 1.6 1.6z" fill="#e83a3a"/><path d="M513.5 127.5l4.2-5.6 1.6 1.6z" fill="#3a80e0"/>
 <g><path d="M541.5 116.5h7l3 3v10.5h-10z" fill="#f4f6f6" stroke="#8f9fa8"/><circle cx="544" cy="121" r="1.2" fill="none" stroke="#777" stroke-width=".6"/><circle cx="548" cy="124" r="1.2" fill="none" stroke="#777" stroke-width=".6"/><circle cx="551.5" cy="128.5" r="3.5" fill="#3aa040"/><path d="M549.5 128.5h4M551.5 126.5v4" stroke="#fff" stroke-width="1.2"/></g>
</svg>
<div class="a" style="left:332px;top:138px;width:685px;height:441px;background:linear-gradient(100deg,rgba(255,255,255,0) 55%,rgba(255,255,255,.03) 85%),linear-gradient(175deg,#486d8e 0%,#44698a 40%,#416788 100%)"></div>
<div class="a" style="left:347px;top:159px;width:200px;height:200px;border:1px solid #9da2a8;border-radius:3px;background:linear-gradient(180deg,#c4c8ce 0,#b9bdc4 24px,#b6bac1 100%)"></div>
<svg class="a" style="left:353.5px;top:164.5px" width="16" height="16"><use href="#i-view"/></svg>
<div class="t" style="left:367px;top:165.5px;width:160px;text-align:center;font-weight:bold;color:#868b92;font-size:12.3px">ViewSales</div>
<div class="a" style="left:523px;top:163px;width:18px;height:17px;border-radius:3px;border:1px solid #6a6f76;background:linear-gradient(180deg,#e2e4e7,#bfc3c8)"></div>
<svg class="a" style="left:526px;top:165.5px" width="12" height="12"><path d="M2.5 2.5l7 7M9.5 2.5l-7 7" stroke="#5a5a5a" stroke-width="1.6"/></svg>
<div class="a" style="left:352px;top:183px;width:190px;height:172px;border:1px solid #a4a8ae;background:#dadde1;box-shadow:inset 1px 1px 0 #eef0f2"></div>
<div class="a" style="left:355px;top:186px;width:184px;height:165px;border:1px solid #7c8188;border-bottom-color:#c8ccd0;border-right-color:#c8ccd0;background:#fff"></div>
<div class="a" style="left:356px;top:187px;width:167px;height:163px;background:#fff;overflow:hidden">
<div class="a" style="left:20px;top:0px;width:126px;height:15px;background:#f0f0f0"></div>
<svg class="a" style="left:0.5px;top:2.5px" width="15" height="10"><use href="#t-01"/></svg>
<div class="f" style="left:25px;top:0.5px">ProductID</div>
<svg class="a" style="left:0.5px;top:18.5px" width="15" height="10"><use href="#t-az"/></svg>
<div class="f" style="left:25px;top:16.5px">ProductName</div>
<div class="a" style="left:20px;top:32px;width:126px;height:15px;background:#f0f0f0"></div>
<svg class="a" style="left:0.5px;top:34.5px" width="15" height="10"><use href="#t-01"/></svg>
<div class="f" style="left:25px;top:32.5px">CategoryID</div>
<svg class="a" style="left:0.5px;top:50.5px" width="15" height="10"><use href="#t-az"/></svg>
<div class="f" style="left:25px;top:48.5px">CategoryName</div>
<div class="a" style="left:20px;top:64px;width:126px;height:15px;background:#f0f0f0"></div>
<svg class="a" style="left:0.5px;top:66.5px" width="15" height="10"><use href="#t-az"/></svg>
<div class="f" style="left:25px;top:64.5px">ProductDescription</div>
<svg class="a" style="left:0.5px;top:82.5px" width="15" height="10"><use href="#t-az"/></svg>
<div class="f" style="left:25px;top:80.5px">SerialNumber</div>
<div class="a" style="left:20px;top:96px;width:126px;height:15px;background:#f0f0f0"></div>
<svg class="a" style="left:0.5px;top:98.5px" width="15" height="10"><use href="#t-01"/></svg>
<div class="f" style="left:25px;top:96.5px">UnitPrice</div>
<svg class="a" style="left:0.5px;top:114.5px" width="15" height="10"><use href="#t-01"/></svg>
<div class="f" style="left:25px;top:112.5px">ReorderLevel</div>
<div class="a" style="left:20px;top:128px;width:126px;height:15px;background:#f0f0f0"></div>
<svg class="a" style="left:0.5px;top:130.5px" width="15" height="10"><use href="#t-az"/></svg>
<div class="f" style="left:25px;top:128.5px">LeadTime</div>
<svg class="a" style="left:0.5px;top:146.5px" width="15" height="10"><use href="#t-az"/></svg>
<div class="f" style="left:25px;top:144.5px">Status</div>
<div class="a" style="left:20px;top:160px;width:126px;height:15px;background:#f0f0f0"></div>
</div>
<div class="a" style="left:523px;top:187px;width:15px;height:163px;background:linear-gradient(90deg,#c3c5c9,#dcdee1)"></div>
<div class="a" style="left:523px;top:187px;width:15px;height:16px;background:linear-gradient(90deg,#e4e5e8,#f2f3f4);border:1px solid #c8cacd"></div>
<svg class="a" style="left:526px;top:191px" width="8" height="8"><path d="M4 0L7.5 7.5H.5z" fill="#333"/></svg>
<div class="a" style="left:523px;top:203px;width:15px;height:120px;border:1.5px solid #1f3550;border-left:none;border-radius:0 13px 13px 0;background:linear-gradient(90deg,#f4f8fb 0,#b9cfe2 30%,#c8dcec 60%,#e6f3fb 100%)"></div>
<svg class="a" style="left:523px;top:321px" width="15" height="29"><defs><linearGradient id="vs2" x1="0" y1="0" x2="0" y2="1"><stop offset="0" stop-color="#000" stop-opacity="0"/><stop offset=".6" stop-color="#000" stop-opacity=".18"/><stop offset="1" stop-color="#000" stop-opacity=".62"/></linearGradient><linearGradient id="vb2" x1="0" x2="1"><stop offset="0" stop-color="#e2e3e6"/><stop offset="1" stop-color="#f4f5f6"/></linearGradient></defs>
<rect x="0" y="0" width="15" height="12" fill="url(#vs2)"/>
<path d="M0 12 Q15 12 15 5 V29 H0z" fill="url(#vb2)"/>
<path d="M4 17h7.5l-3.75 7.5z" fill="#333"/></svg>
<div class="a" style="left:570px;top:295px;width:200px;height:167px;border:1px solid #9da2a8;border-radius:3px;background:linear-gradient(180deg,#c4c8ce 0,#b9bdc4 24px,#b6bac1 100%)"></div>
<svg class="a" style="left:576.5px;top:300.5px" width="16" height="16"><use href="#i-view"/></svg>
<div class="t" style="left:590px;top:301.5px;width:160px;text-align:center;font-weight:bold;color:#868b92;font-size:12.3px">ViewOrder</div>
<div class="a" style="left:746px;top:299px;width:18px;height:17px;border-radius:3px;border:1px solid #6a6f76;background:linear-gradient(180deg,#e2e4e7,#bfc3c8)"></div>
<svg class="a" style="left:749px;top:301.5px" width="12" height="12"><path d="M2.5 2.5l7 7M9.5 2.5l-7 7" stroke="#5a5a5a" stroke-width="1.6"/></svg>
<div class="a" style="left:575px;top:319px;width:190px;height:138px;border:1px solid #a4a8ae;background:#dadde1;box-shadow:inset 1px 1px 0 #eef0f2"></div>
<div class="a" style="left:578px;top:322px;width:184px;height:130px;border:1px solid #7c8188;border-bottom-color:#c8ccd0;border-right-color:#c8ccd0;background:#fff"></div>
<div class="a" style="left:579px;top:323px;width:182px;height:128px;background:#fff;overflow:hidden">
<div class="a" style="left:20px;top:0px;width:142px;height:15px;background:#f0f0f0"></div>
<svg class="a" style="left:0.5px;top:2.5px" width="15" height="10"><use href="#t-19"/></svg>
<div class="f" style="left:25px;top:0.5px">OrderID</div>
<svg class="a" style="left:0.5px;top:18.5px" width="15" height="10"><use href="#t-19"/></svg>
<div class="f" style="left:25px;top:16.5px">ProductID</div>
<div class="a" style="left:20px;top:32px;width:142px;height:15px;background:#f0f0f0"></div>
<svg class="a" style="left:0.5px;top:34.5px" width="15" height="10"><use href="#t-01"/></svg>
<div class="f" style="left:25px;top:32.5px">Discount</div>
<svg class="a" style="left:0px;top:48px" width="14" height="16"><use href="#t-cal"/></svg>
<div class="f" style="left:25px;top:48.5px">OrderDate</div>
<div class="a" style="left:20px;top:64px;width:142px;height:15px;background:#f0f0f0"></div>
<svg class="a" style="left:0.5px;top:66.5px" width="15" height="10"><use href="#t-az"/></svg>
<div class="f" style="left:25px;top:64.5px">CompanyName</div>
<svg class="a" style="left:0.5px;top:82.5px" width="15" height="10"><use href="#t-az"/></svg>
<div class="f" style="left:25px;top:80.5px">CustomerContactFirst...</div>
<div class="a" style="left:20px;top:96px;width:142px;height:15px;background:#f0f0f0"></div>
<svg class="a" style="left:0.5px;top:98.5px" width="15" height="10"><use href="#t-az"/></svg>
<div class="f" style="left:25px;top:96.5px">CustomerContactLast...</div>
<svg class="a" style="left:0.5px;top:114.5px" width="15" height="10"><use href="#t-az"/></svg>
<div class="f" style="left:25px;top:112.5px">CustomerContactPho...</div>
</div>
<div class="a" style="left:790px;top:154px;width:200px;height:199px;border:1px solid #9da2a8;border-radius:3px;background:linear-gradient(180deg,#c4c8ce 0,#b9bdc4 24px,#b6bac1 100%)"></div>
<svg class="a" style="left:796.5px;top:159.5px" width="16" height="16"><use href="#i-view"/></svg>
<div class="t" style="left:810px;top:160.5px;width:160px;text-align:center;font-weight:bold;color:#000;font-size:12.3px">ViewSupplier</div>
<div class="a" style="left:966px;top:158px;width:18px;height:17px;border-radius:3px;border:1px solid #5a1008;background:linear-gradient(180deg,#e8806a 0,#c8341c 55%,#a01c0c 100%)"></div>
<svg class="a" style="left:969px;top:160.5px" width="12" height="12"><path d="M2.2 2.2l7.6 7.6M9.8 2.2l-7.6 7.6" stroke="#fff" stroke-width="2.2"/></svg>
<div class="a" style="left:795px;top:178px;width:190px;height:170px;border:1px solid #a4a8ae;background:#dadde1;box-shadow:inset 1px 1px 0 #eef0f2"></div>
<div class="a" style="left:798px;top:181px;width:184px;height:162px;border:1px solid #7c8188;border-bottom-color:#c8ccd0;border-right-color:#c8ccd0;background:#fff"></div>
<div class="a" style="left:799px;top:182px;width:182px;height:160px;background:#fff;overflow:hidden">
<div class="a" style="left:20px;top:0px;width:142px;height:15px;background:#f0f0f0"></div>
<svg class="a" style="left:0.5px;top:2.5px" width="15" height="10"><use href="#t-19"/></svg>
<div class="f" style="left:25px;top:0.5px">ProductID</div>
<svg class="a" style="left:0.5px;top:18.5px" width="15" height="10"><use href="#t-19"/></svg>
<div class="f" style="left:25px;top:16.5px">TransactionID</div>
<div class="a" style="left:20px;top:32px;width:142px;height:15px;background:#f0f0f0"></div>
<svg class="a" style="left:0px;top:32px" width="14" height="16"><use href="#t-cal"/></svg>
<div class="f" style="left:25px;top:32.5px">OrderDate</div>
<svg class="a" style="left:0px;top:48px" width="14" height="16"><use href="#t-cal"/></svg>
<div class="f" style="left:25px;top:48.5px">DateRequired</div>
<div class="a" style="left:20px;top:64px;width:142px;height:15px;background:#f0f0f0"></div>
<svg class="a" style="left:0px;top:64px" width="14" height="16"><use href="#t-cal"/></svg>
<div class="f" style="left:25px;top:64.5px">DatePromised</div>
<svg class="a" style="left:0px;top:80px" width="14" height="16"><use href="#t-cal"/></svg>
<div class="f" style="left:25px;top:80.5px">ShipDate</div>
<div class="a" style="left:20px;top:96px;width:142px;height:15px;background:#f0f0f0"></div>
<svg class="a" style="left:0.5px;top:98.5px" width="15" height="10"><use href="#t-19"/></svg>
<div class="f" style="left:25px;top:96.5px">SupplierID</div>
<svg class="a" style="left:0.5px;top:114.5px" width="15" height="10"><use href="#t-az"/></svg>
<div class="f" style="left:25px;top:112.5px">SupplierName</div>
<div class="a" style="left:20px;top:128px;width:142px;height:15px;background:#f0f0f0"></div>
<svg class="a" style="left:0.5px;top:130.5px" width="15" height="10"><use href="#t-az"/></svg>
<div class="f" style="left:25px;top:128.5px">SupplierContactName</div>
<svg class="a" style="left:0.5px;top:146.5px" width="15" height="10"><use href="#t-az"/></svg>
<div class="f" style="left:25px;top:144.5px">SupplierPhoneNumber</div>
</div>
<svg class="a" style="left:0;top:0" width="1044" height="667">
<g shape-rendering="crispEdges" fill="none" stroke="#000" stroke-width="1.2">
<path d="M503 195.5h15.7L584.2 347.5h15.5"/>
<path d="M741 347.5h14.3L805 190.5h14.5"/>
</g>
<g stroke="#3a5ee0" stroke-width="1" fill="#8aa6ea" fill-opacity=".85">
<circle cx="549.3" cy="271.4" r="5.2"/><circle cx="554.7" cy="271.4" r="5.2"/>
<circle cx="778.5" cy="268.3" r="5.2"/><circle cx="783.7" cy="268.3" r="5.2"/>
</g>
<g fill="none" stroke="#3a5ee0" stroke-width=".7" opacity=".8"><circle cx="549.3" cy="271.4" r="5"/><circle cx="778.5" cy="268.3" r="5"/></g>
</svg>
<div class="a" style="left:1017px;top:138px;width:16px;height:441px;background:linear-gradient(90deg,#c6c8cc,#dcdee1);border-right:1px solid #b4b7bb"></div>
<div class="a" style="left:1017px;top:138px;width:16px;height:17px;background:linear-gradient(90deg,#e4e5e8,#eeeff1);border:1px solid #c8cacd"></div>
<svg class="a" style="left:1021px;top:142px" width="8" height="8"><path d="M4 0L7.5 7.5H.5z" fill="#333"/></svg>
<div class="a" style="left:1017px;top:155px;width:16px;height:56px;border:1.5px solid #1f3550;border-left:none;border-radius:0 16px 16px 0;background:linear-gradient(90deg,#f4f8fb 0,#b9cfe2 30%,#c8dcec 60%,#e6f3fb 100%)"></div>
<svg class="a" style="left:1017px;top:550px" width="15" height="29"><defs><linearGradient id="vs3" x1="0" y1="0" x2="0" y2="1"><stop offset="0" stop-color="#000" stop-opacity="0"/><stop offset=".6" stop-color="#000" stop-opacity=".18"/><stop offset="1" stop-color="#000" stop-opacity=".62"/></linearGradient><linearGradient id="vb3" x1="0" x2="1"><stop offset="0" stop-color="#e2e3e6"/><stop offset="1" stop-color="#f4f5f6"/></linearGradient></defs>
<rect x="0" y="0" width="15" height="12" fill="url(#vs3)"/>
<path d="M0 12 Q15 12 15 4 V29 H0z" fill="url(#vb3)"/>
<path d="M4 15.5h7.5l-3.75 7.5z" fill="#333"/></svg>
<div class="a" style="left:332px;top:579px;width:685px;height:15px;background:linear-gradient(180deg,#c6c8cc,#dcdee1)"></div>
<div class="a" style="left:332px;top:579px;width:18px;height:15px;background:linear-gradient(180deg,#e4e5e8,#eeeff1);border:1px solid #c8cacd"></div>
<svg class="a" style="left:338px;top:583px" width="7" height="8"><path d="M0 4L6.5 .5v7z" fill="#333"/></svg>
<div class="a" style="left:349px;top:579px;width:139px;height:15px;border:1.5px solid #1f3550;border-top:none;border-radius:0 0 16px 16px;background:linear-gradient(180deg,#f4f8fb 0,#b9cfe2 35%,#c8dcec 65%,#e6f3fb 100%)"></div>
<svg class="a" style="left:980px;top:579px" width="37" height="15"><defs><linearGradient id="hs4" x1="0" x2="1"><stop offset="0" stop-color="#000" stop-opacity="0"/><stop offset=".6" stop-color="#000" stop-opacity=".18"/><stop offset="1" stop-color="#000" stop-opacity=".6"/></linearGradient><linearGradient id="hb4" x1="0" y1="0" x2="0" y2="1"><stop offset="0" stop-color="#eeeff1"/><stop offset="1" stop-color="#e2e3e6"/></linearGradient></defs>
<rect x="0" y="0" width="12" height="15" fill="url(#hs4)"/>
<path d="M12 15 Q20 15 20 0 H37 V15z" fill="url(#hb4)"/>
<path d="M25 3.7999999999999545l6.5 3.75-6.5 3.75z" fill="#333"/></svg>
<svg class="a" style="left:1017px;top:579px" width="16" height="15"><rect x="0" y="0" width="16" height="15" fill="#dadce0"/><circle cx="8" cy="7.5" r="6.6" fill="#e8f2f2" stroke="#8a9aa4" stroke-width="1.2"/><path d="M12 3.5L7 7l1.5 1.2z" fill="#e83a3a"/><path d="M4 11.5L8.5 8.2 7 7z" fill="#3a78e0"/></svg>
<div class="a" style="left:329px;top:597px;width:707px;height:3px;background:#b9d0e6;border-top:2px solid #141c26"></div>
<div class="a" style="left:339px;top:600px;width:52px;height:24px;border:1.5px solid #2a3038;border-top:none;border-radius:0 0 5px 5px;background:linear-gradient(180deg,#a9bfd6 0,#c6d6e6 60%,#dbe6f0 100%)"></div>
<div class="t" style="left:339px;top:606px;width:52px;text-align:center;font-size:12.5px">Model</div>
<div class="a" style="left:391px;top:600px;width:42px;height:24px;border:1.5px solid #2a3038;border-top:none;border-radius:0 0 5px 5px;background:linear-gradient(180deg,#fafbfc 0,#eceef1 60%,#d8dbe0 100%)"></div>
<div class="t" style="left:391px;top:606px;width:42px;text-align:center;font-size:12.5px">Grid</div>
<div class="a" style="left:433px;top:600px;width:42px;height:24px;border:1.5px solid #2a3038;border-top:none;border-radius:0 0 5px 5px;background:linear-gradient(180deg,#fafbfc 0,#eceef1 60%,#d8dbe0 100%)"></div>
<div class="t" style="left:433px;top:606px;width:42px;text-align:center;font-size:12.5px">SQL</div>
<div class="a" style="left:475px;top:600px;width:71px;height:24px;border:1.5px solid #2a3038;border-top:none;border-radius:0 0 5px 5px;background:linear-gradient(180deg,#fafbfc 0,#eceef1 60%,#d8dbe0 100%)"></div>
<div class="t" style="left:475px;top:606px;width:71px;text-align:center;font-size:12.5px">Columns</div>
<div class="a" style="left:546px;top:600px;width:62px;height:24px;border:1.5px solid #2a3038;border-top:none;border-radius:0 0 5px 5px;background:linear-gradient(180deg,#fafbfc 0,#eceef1 60%,#d8dbe0 100%)"></div>
<div class="t" style="left:546px;top:606px;width:62px;text-align:center;font-size:12.5px">Indexes</div>
<div class="a" style="left:608px;top:600px;width:90px;height:24px;border:1.5px solid #2a3038;border-top:none;border-radius:0 0 5px 5px;background:linear-gradient(180deg,#fafbfc 0,#eceef1 60%,#d8dbe0 100%)"></div>
<div class="t" style="left:608px;top:606px;width:90px;text-align:center;font-size:12.5px">Foreign Keys</div>
<div class="a" style="left:698px;top:600px;width:82px;height:24px;border:1.5px solid #2a3038;border-top:none;border-radius:0 0 5px 5px;background:linear-gradient(180deg,#fafbfc 0,#eceef1 60%,#d8dbe0 100%)"></div>
<div class="t" style="left:707.5px;top:606px;font-size:12.5px">Caching</div>
<svg class="a" style="left:754px;top:604px" width="15" height="15"><circle cx="7.5" cy="7.5" r="6.8" fill="#50b04a" stroke="#2a7a28" stroke-width=".8"/><path d="M4 7.5l2.5 2.5 4.5-5" fill="none" stroke="#fff" stroke-width="1.8"/></svg>
<div class="a" style="left:780px;top:600px;width:129px;height:24px;border:1.5px solid #2a3038;border-top:none;border-radius:0 0 5px 5px;background:linear-gradient(180deg,#fafbfc 0,#eceef1 60%,#d8dbe0 100%)"></div>
<div class="t" style="left:780px;top:606px;width:129px;text-align:center;font-size:12.5px">Cardinality Statistics</div>
<div class="a" style="left:909px;top:600px;width:84px;height:24px;border:1.5px solid #2a3038;border-top:none;border-radius:0 0 5px 5px;background:linear-gradient(180deg,#fafbfc 0,#eceef1 60%,#d8dbe0 100%)"></div>
<div class="t" style="left:909px;top:606px;width:84px;text-align:center;font-size:12.5px">Test Identity</div>
<div class="a" style="left:993px;top:600px;width:39px;height:24px;border:1.5px solid #2a3038;border-top:none;border-radius:0 0 5px 5px;background:linear-gradient(180deg,#fafbfc 0,#eceef1 60%,#d8dbe0 100%)"></div>
<div class="t" style="left:993px;top:606px;width:39px;text-align:center;font-size:12.5px">Info</div>
<div class="a" style="left:8px;top:629px;width:1028px;height:1px;background:#a8abb0"></div>
<div class="a" style="left:822px;top:630px;width:1px;height:28px;background:#a8abb0"></div>
<div class="a" style="left:852px;top:630px;width:1px;height:28px;background:#a8abb0"></div>
<svg class="a" style="left:829px;top:633px" width="16" height="17"><path d="M3.2 8V5.5a3.6 3.6 0 0 1 7.2 0V6.5" fill="none" stroke="#8a8a8a" stroke-width="2"/><rect x="1.5" y="7.5" width="13" height="9" fill="#f6d260" stroke="#e08a18"/><rect x="2.8" y="8.8" width="10.4" height="6.4" fill="#fbe690" stroke="#fff6d0" stroke-width=".8"/><path d="M4 11h2.5M9.5 11H12M4 13h2.5M9.5 13H12" stroke="#e0a030" stroke-width=".8"/><rect x="7.3" y="10" width="1.5" height="3.5" fill="#9a6a20"/></svg>
<div class="a" style="left:860px;top:634px;width:147px;height:20px;border:1px solid #a8abb0;background:linear-gradient(180deg,#fbfbfc 0,#e9eaec 50%,#d6d8db 100%)"></div>
<div class="a" style="left:861px;top:635px;width:59px;height:18px;background:linear-gradient(180deg,#ecc290 0,#dea060 35%,#c86a12 50%,#d27a20 80%,#e89a48 100%);border:1px solid #9a4810;box-shadow:0 0 2px #e8a060"></div>
<div class="t" style="left:861.5px;top:638px;width:147px;text-align:center;font-size:12.2px">317M of 778M</div>
<svg class="a" style="left:1015px;top:635px" width="12" height="17"><rect x=".5" y=".5" width="11" height="16" rx="1" fill="#e8eef6" stroke="#8a98a8"/><path d="M3 7h6l-2-2M9 10H3l2 2" fill="none" stroke="#3060d0" stroke-width="1"/></svg>
</body></html>
